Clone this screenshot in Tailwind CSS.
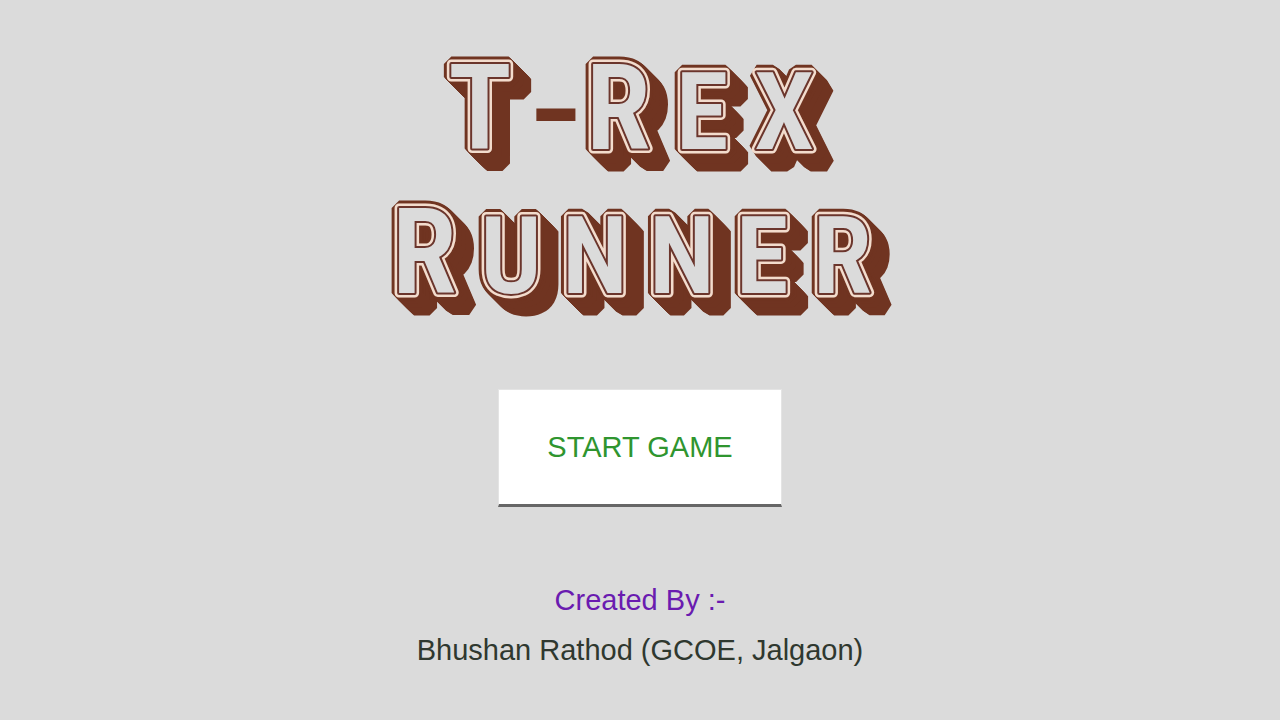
<!DOCTYPE html>
<html lang="en">
<head>
  <meta charset="UTF-8">
  <meta name="viewport" content="width=device-width, initial-scale=1.0">
  <title>T-Rex Runner</title>
  <!-- Tailwind CSS CDN -->
  <script src="https://cdn.jsdelivr.net/npm/@tailwindcss/browser@4"></script>
</head>
<body class="min-h-screen bg-[#dbdbdb] font-['Liberation_Sans',Arial,sans-serif]">
  <main class="flex flex-col items-center px-4 pt-[45px] pb-10 text-center">

    <!-- Title: outlined letters with a block shadow -->
    <h1 class="w-full max-w-[520px]">
      <svg viewBox="0 0 520 280" class="block w-full overflow-visible font-['Roboto_Condensed','Roboto',sans-serif] font-semibold text-[108px]" text-anchor="middle">
        <!-- Block shadow -->
        <use href="#letters" stroke-linejoin="bevel" class="fill-[#703421] stroke-[#703421] stroke-[15px] [filter:drop-shadow(1px_1px_0_#703421)_drop-shadow(2px_2px_0_#703421)_drop-shadow(4px_4px_0_#703421)_drop-shadow(8px_8px_0_#703421)]" />
        <!-- Cream ring and inner line -->
        <use href="#letters" stroke-linejoin="round" class="fill-[#f3dccd] stroke-[#f3dccd] stroke-[9px]" />
        <use href="#letters" stroke-linejoin="round" class="fill-[#6b352c] stroke-[#6b352c] stroke-[4px]" />
        <!-- Letter faces -->
        <g class="fill-[#dbdbdb]">
          <g id="letters">
            <text x="100" y="104" class="text-[118px]">T</text>
            <text y="104"><tspan x="238" class="text-[118px]">R</tspan><tspan x="322 404">EX</tspan></text>
            <text y="248"><tspan x="44" class="text-[118px]">R</tspan><tspan x="131 215 302 382 462">UNNER</tspan></text>
          </g>
        </g>
        <text x="176" y="112" class="fill-[#703421] font-['Liberation_Sans',Arial,sans-serif] text-[160px] font-normal">-</text>
      </svg>
    </h1>

    <!-- Start button -->
    <button type="button" class="mt-16 border border-b-3 border-[#e4e4e4] border-b-[#666666] bg-white px-12 pt-[41px] pb-10 text-[29px] leading-[33px] text-[#2f952f] hover:bg-gray-50">START GAME</button>

    <!-- Credits -->
    <p class="mt-[75px] text-[29px] leading-9 text-[#6a1bb0]">Created By :-</p>
    <p class="mt-[14px] text-[29px] leading-9 text-[#2f382f]">Bhushan Rathod (GCOE, Jalgaon)</p>
  </main>
</body>
</html>
